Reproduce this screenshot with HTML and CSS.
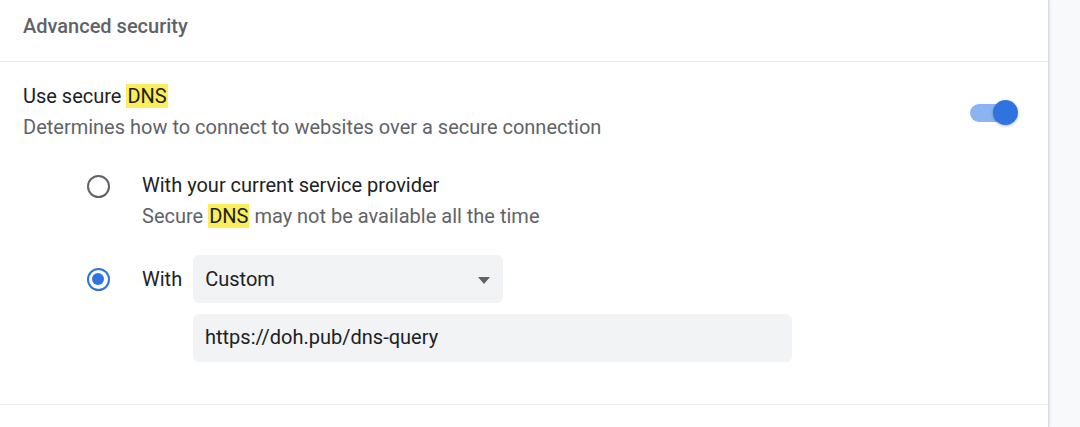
FILE: index.html
```html
<!DOCTYPE html>
<html lang="en">
<head>
<meta charset="utf-8">
<title>Advanced security</title>
<link rel="stylesheet" href="styles.css">
</head>
<body>
<div class="page">
  <div class="card">
    <div class="header">Advanced security</div>
    <div class="section">
      <div class="row">
        <div class="row-text">
          <div class="title">Use secure <mark class="hl">DNS</mark></div>
          <div class="desc">Determines how to connect to websites over a secure connection</div>
        </div>
        <div class="toggle"><span class="track"></span><span class="knob"></span></div>
      </div>
      <div class="radios">
        <div class="radio-row">
          <span class="radio"></span>
          <div class="radio-text">
            <div class="title">With your current service provider</div>
            <div class="desc">Secure <mark class="hl">DNS</mark> may not be available all the time</div>
          </div>
        </div>
        <div class="radio-row custom">
          <span class="radio checked"></span>
          <div class="custom-body">
            <div class="custom-line">
              <span class="title">With</span>
              <div class="select">
                <span>Custom</span>
                <span class="arrow"></span>
              </div>
            </div>
            <div class="input">https://doh.pub/dns-query</div>
          </div>
        </div>
      </div>
    </div>
    <div class="after"></div>
  </div>
</div>
</body>
</html>
```
FILE: styles.css
```css
html, body {
  margin: 0;
  padding: 0;
}
body {
  background: #f8f9fa;
  font-family: Roboto, "Liberation Sans", Arial, sans-serif;
  font-size: 20px;
  line-height: 31px;
}
.page {
  width: 1080px;
  height: 427px;
  overflow: hidden;
}
.card {
  width: 1048px;
  height: 427px;
  background: #fff;
  border-right: 1px solid #dadce0;
  box-shadow: 1px 0 2px rgba(60, 64, 67, 0.12);
}
.header {
  height: 50px;
  padding: 11px 0 0 23px;
  border-bottom: 1px solid #ebebeb;
  color: #5f6368;
  font-weight: 500;
}
.section {
  padding: 19px 0 42px 23px;
  border-bottom: 1px solid #ebebeb;
}
.row {
  display: flex;
  align-items: center;
  justify-content: space-between;
  padding-right: 30px;
}
.title {
  color: #202124;
}
.desc {
  color: #5f6368;
}
.hl {
  background: #fcee5a;
  color: #202124;
  padding: 0 1px;
}
.toggle {
  position: relative;
  width: 48px;
  height: 26px;
  margin-top: 1px;
}
.track {
  position: absolute;
  left: 0;
  top: 4px;
  width: 44px;
  height: 18px;
  border-radius: 9px;
  background: #8ab4f3;
}
.knob {
  position: absolute;
  right: 0;
  top: 0;
  width: 25px;
  height: 25px;
  border-radius: 50%;
  background: #2f73e0;
  box-shadow: 0 1px 3px rgba(0, 0, 0, 0.3);
}
.radios {
  padding-left: 64px;
  margin-top: 27px;
}
.radio-row {
  display: flex;
  align-items: flex-start;
}
.radio {
  box-sizing: border-box;
  width: 23px;
  height: 23px;
  border: 2.5px solid #5f6368;
  border-radius: 50%;
  margin-top: 5px;
  margin-right: 32px;
  flex: none;
  position: relative;
}
.radio.checked {
  border-color: #2f73e0;
}
.radio.checked::after {
  content: "";
  position: absolute;
  left: 3px;
  top: 3px;
  width: 12px;
  height: 12px;
  border-radius: 50%;
  background: #2f73e0;
}
.custom {
  margin-top: 23px;
  align-items: flex-start;
}
.custom .radio {
  margin-top: 13px;
}
.custom-line {
  display: flex;
  align-items: center;
  gap: 11px;
}
.select {
  box-sizing: border-box;
  width: 310px;
  height: 48px;
  border-radius: 6px;
  background: #f1f3f4;
  color: #202124;
  display: flex;
  align-items: center;
  justify-content: space-between;
  padding: 0 13px 0 12px;
}
.arrow {
  width: 0;
  height: 0;
  border-left: 6.5px solid transparent;
  border-right: 6.5px solid transparent;
  border-top: 7px solid #5f6368;
  margin-top: 2px;
}
.input {
  box-sizing: border-box;
  width: 599px;
  height: 48px;
  margin-top: 11px;
  margin-left: 51px;
  border-radius: 6px;
  background: #f1f3f4;
  color: #202124;
  padding: 8px 12px;
}
```
